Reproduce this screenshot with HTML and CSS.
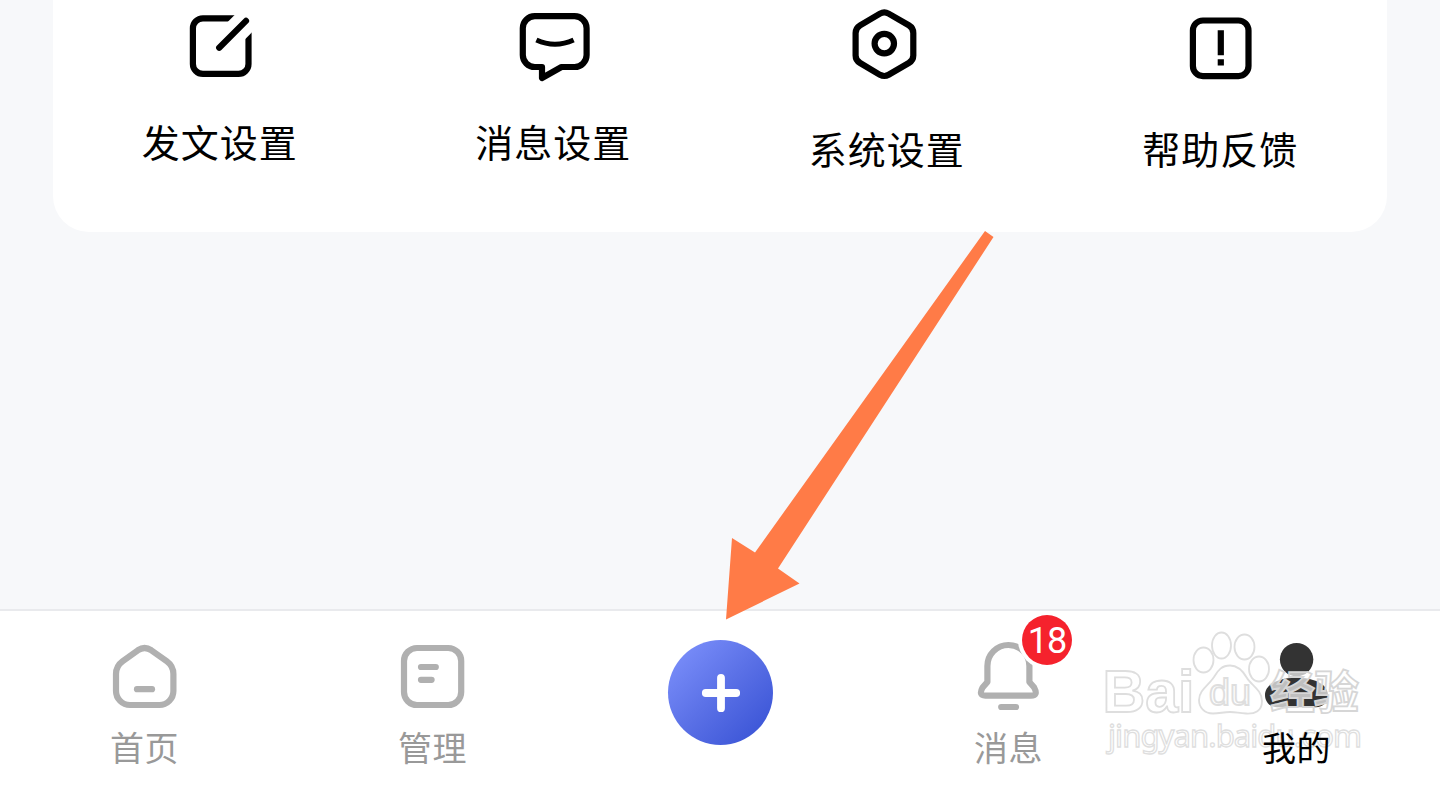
FILE: index.html
```
<!DOCTYPE html>
<html lang="zh-CN">
<head>
  <meta charset="UTF-8">
  <meta name="viewport" content="width=device-width, initial-scale=1.0">
  <title>我的</title>
  <link rel="stylesheet" href="styles.css">
</head>
<body>

<div class="page">
  <main class="content">
    <div class="card">
      <div class="tool">
        <svg class="icon" viewBox="0 0 80 80">
          <rect x="12.9" y="13.3" width="55.6" height="55.6" rx="10"/>
          <path class="gap" d="M36 46 L76 6"/>
          <path class="round" d="M39.2 42.7 L66 15.9"/>
        </svg>
        <span class="label">发文设置</span>
      </div>
      <div class="tool">
        <svg class="icon" viewBox="0 0 80 80">
          <path d="M21.8 11.2 H61.6 a12 12 0 0 1 12 12 V50 a12 12 0 0 1 -12 12 H48.5 L29 73 V62 H21.8 a12 12 0 0 1 -12 -12 V23.2 a12 12 0 0 1 12 -12 Z"/>
          <path class="smile" d="M23.4 35 Q42 43.5 60.6 35"/>
        </svg>
        <span class="label">消息设置</span>
      </div>
      <div class="tool low">
        <svg class="icon" viewBox="0 0 80 80">
          <path d="M33 8.6 Q37.3 6.2 41.6 8.6 L61.8 20.3 Q66.3 23 66.3 28 V50.4 Q66.3 55.4 61.8 58 L41.6 69.8 Q37.3 72.2 33 69.8 L13.1 58 Q8.6 55.4 8.6 50.4 V28 Q8.6 23 13.1 20.3 Z"/>
          <circle cx="37.3" cy="38.6" r="9.7"/>
        </svg>
        <span class="label">系统设置</span>
      </div>
      <div class="tool low">
        <svg class="icon" viewBox="0 0 80 80">
          <rect x="12.9" y="15.5" width="55.6" height="55.6" rx="10"/>
          <path d="M40.8 25.3 V50.3 M40.8 54.3 V60.6"/>
        </svg>
        <span class="label">帮助反馈</span>
      </div>
    </div>
  </main>

  <nav class="tabbar">
    <div class="tab">
      <svg class="icon" viewBox="0 0 80 80">
        <path d="M34 13.2 Q40.6 8.8 47.2 13.2 L62.8 24.2 Q69.4 29 69.4 37 V54 a14 14 0 0 1 -14 14 H26 a14 14 0 0 1 -14 -14 V37 Q12 29 18.6 24.2 Z"/>
        <path class="round" d="M33 52.2 H48"/>
      </svg>
      <span class="label">首页</span>
    </div>
    <div class="tab">
      <svg class="icon" viewBox="0 0 80 80">
        <rect x="12" y="11" width="57.2" height="57" rx="13"/>
        <path class="round" d="M29 30 H43.8 M29 42.8 H39.6"/>
      </svg>
      <span class="label">管理</span>
    </div>
    <div class="tab">
      <div class="add">
        <svg viewBox="0 0 40 40">
          <path d="M20 4.8 V35.2 M4.8 20 H35.2"/>
        </svg>
      </div>
    </div>
    <div class="tab">
      <svg class="icon" viewBox="0 0 80 80">
        <path d="M19.4 29 a21 21 0 0 1 42 0 V45 L66.2 50.6 Q70.5 58.6 63 58.6 H17.3 Q10.2 58.6 14.6 50.6 L19.4 45 Z"/>
        <path class="round" d="M33.2 70 H48"/>
      </svg>
      <span class="badge">18</span>
      <span class="label">消息</span>
    </div>
    <div class="tab active">
      <svg class="icon" viewBox="0 0 80 80">
        <circle cx="40.6" cy="22.6" r="16.7"/>
        <path d="M24 43 C32 40 49 40 57 43 C66 45.5 72 51 72 58 C72 65 67 70.2 60 70.2 H21 C14 70.2 9 65 9 58 C9 51 15 45.5 24 43 Z"/>
      </svg>
      <span class="label">我的</span>
    </div>
  </nav>

  <svg class="watermark" viewBox="0 0 290 170">
    <g class="paw">
      <ellipse cx="23.5" cy="50" rx="10" ry="12.5"/>
      <ellipse cx="41.5" cy="35.5" rx="9.5" ry="13"/>
      <ellipse cx="64.5" cy="37" rx="10" ry="12.5"/>
      <ellipse cx="79" cy="59" rx="10" ry="12.5"/>
      <path d="M50 55.5 C58 55.5 63 61 67 68 C71 75 82 80 82 91 C82 101 75 104 66 103.5 C58 103 56 102 50 102 C43 102 40 103.5 33 103.5 C24 103.5 19 97 19 90 C19 80 29 75 34 67 C38 60 42 55.5 50 55.5 Z"/>
    </g>
    <text class="baidu" x="12.5" y="101.5" textLength="92" lengthAdjust="spacingAndGlyphs">Bai</text>
    <text class="du" x="119" y="94.5" textLength="42" lengthAdjust="spacingAndGlyphs">du</text>
    <text class="exp" x="180" y="98.5" textLength="89">经验</text>
    <text class="url" x="18" y="136.5" textLength="254">jingyan.baidu.com</text>
  </svg>

  <svg class="arrow" viewBox="0 0 280 400">
    <polygon points="6,399.5 12,318 35,332.5 265,11 273.5,17 58,348.5 79.5,363.5"/>
  </svg>
</div>

</body>
</html>
```
FILE: styles.css
```
* {
  box-sizing: border-box;
}

body {
  margin: 0;
  font-family: "Noto Sans CJK SC", sans-serif;
  background-color: #f7f8fa;
}

.page {
  position: relative;
  display: flex;
  flex-direction: column;
  height: 786px;
  overflow: hidden;
}

.content {
  flex: 1;
  padding: 0 53px;
}

.card {
  display: grid;
  grid-template-columns: repeat(4, 1fr);
  height: 232px;
  padding-top: 5px;
  background-color: #fff;
  border-radius: 0 0 36px 36px;
}

.tool, .tab {
  display: flex;
  flex-direction: column;
  align-items: center;
}

.icon {
  display: block;
  width: 80px;
  height: 80px;
  fill: none;
  stroke: #000;
  stroke-width: 6.2;
  stroke-linejoin: round;
}

.icon .round {
  stroke-linecap: round;
}

.icon .gap {
  stroke: #fff;
  stroke-width: 24.5;
}

.icon .smile {
  stroke-width: 5;
}

.tool .label {
  margin-top: 31px;
  font-size: 38px;
  line-height: 50px;
  letter-spacing: 1px;
  color: #000;
}

.tool.low .label {
  margin-top: 38px;
}

.tabbar {
  display: grid;
  grid-template-columns: repeat(5, 1fr);
  height: 177px;
  padding-top: 26px;
  background-color: #fff;
  border-top: 2px solid #e9eaed;
}

.tab {
  position: relative;
}

.tab .icon {
  stroke: #b0b0b0;
}

.tab .label {
  margin-top: 7px;
  padding-left: 1px;
  font-size: 34px;
  line-height: 46px;
  letter-spacing: 0.5px;
  color: #999;
}

.tab.active .icon {
  fill: #333;
  stroke: none;
}

.tab.active .label {
  color: #000;
  z-index: 1;
}

.add {
  display: flex;
  align-items: center;
  justify-content: center;
  width: 105px;
  height: 105px;
  margin: 3px 0 0 1px;
  border-radius: 50%;
  background: linear-gradient(135deg, #7a8efa 8%, #5a70e6 50%, #3a54d6 92%);
}

.add svg {
  width: 40px;
  height: 40px;
  stroke: #fff;
  stroke-width: 7.8;
  stroke-linecap: round;
}

.badge {
  position: absolute;
  top: -22px;
  left: 158px;
  width: 50px;
  height: 50px;
  border-radius: 50%;
  background-color: #f5222d;
  box-shadow: 0 0 0 4px #fff;
  color: #fff;
  font-family: Roboto, sans-serif;
  font-size: 36px;
  line-height: 52px;
  letter-spacing: -1px;
  text-align: center;
}

/* site mark over the right end of the tab bar */
.watermark {
  position: absolute;
  top: 610px;
  left: 1090px;
  width: 290px;
  height: 170px;
  fill: rgba(255, 255, 255, 0.7);
  stroke: #dedede;
  stroke-width: 1.8;
}

.paw {
  transform: translateX(90px);
}

.watermark text {
  font-family: "Liberation Sans", "Noto Sans CJK SC", sans-serif;
}

.watermark .baidu {
  font-size: 60px;
  font-weight: bold;
}

.watermark .du {
  font-size: 36px;
}

.watermark .exp {
  stroke: #d6d6d6;
  font-size: 45px;
  font-weight: bold;
}

.watermark .url {
  font-family: "Noto Sans", sans-serif;
  font-size: 31px;
  stroke-width: 1.3;
}

.arrow {
  position: absolute;
  top: 220px;
  left: 720px;
  width: 280px;
  height: 400px;
  fill: #ff7b47;
}
```
